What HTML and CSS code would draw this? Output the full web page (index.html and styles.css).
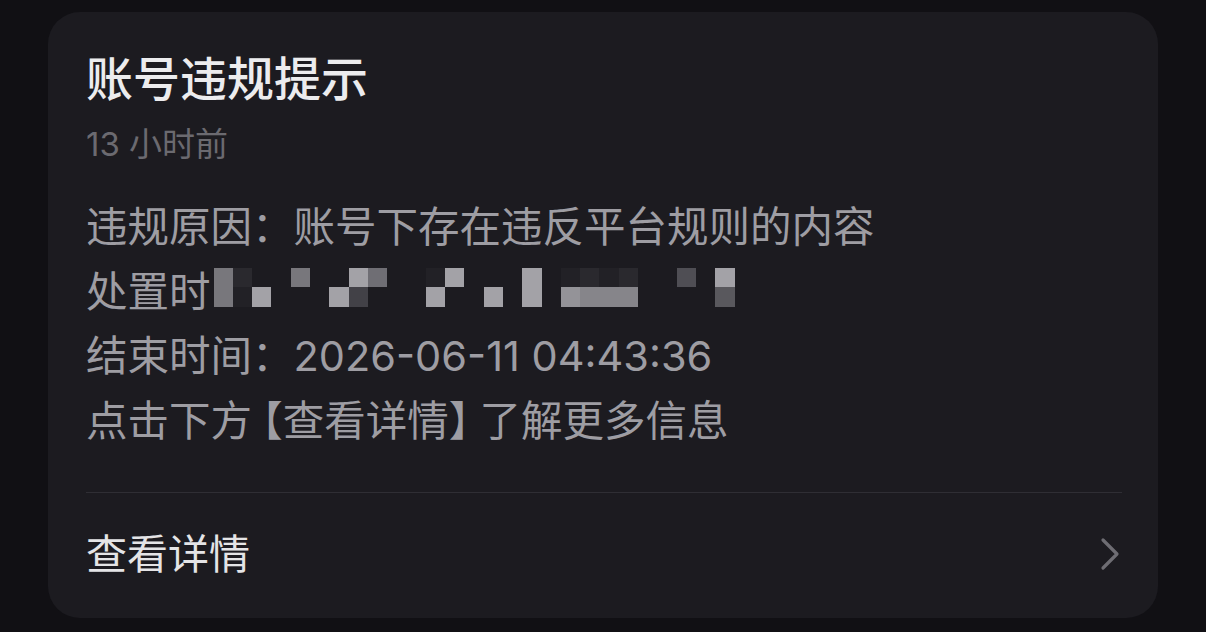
FILE: index.html
```html
<!DOCTYPE html>
<html lang="zh-CN">
<head>
  <meta charset="UTF-8">
  <title>账号违规提示</title>
  <link rel="stylesheet" href="styles.css">
</head>
<body>
  <div class="notice-card">
    <h1 class="notice-title">账号违规提示</h1>
    <div class="notice-time">13 小时前</div>

    <div class="notice-body">
      <p>违规原因：账号下存在违反平台规则的内容</p>
      <p class="redacted">处置时<span class="mosaic">
        <i class="c"></i><i class="g"></i><i></i><i></i><i class="c"></i><i></i><i></i><i class="a"></i><i class="c2"></i><i></i><i></i><i class="h"></i><i class="a"></i><i></i><i></i><i></i><i class="a"></i><i></i><i class="h"></i><i class="g"></i><i class="h"></i><i class="g"></i><i></i><i></i><i class="e"></i><i></i><i class="a"></i>
        <i class="c"></i><i class="h"></i><i class="a"></i><i></i><i></i><i></i><i class="a"></i><i class="f"></i><i></i><i></i><i></i><i class="a"></i><i></i><i></i><i class="a"></i><i></i><i class="a"></i><i></i><i class="a2"></i><i class="b"></i><i class="b"></i><i class="b"></i><i></i><i></i><i></i><i></i><i class="d"></i>
      </span></p>
      <p>结束时间：2026-06-11 04:43:36</p>
      <p>点击下方<span class="bracket bracket-open">【</span>查看详情<span class="bracket bracket-close">】</span>了解更多信息</p>
    </div>

    <div class="notice-divider"></div>

    <div class="notice-link">
      <span>查看详情</span>
      <svg class="chevron" width="22" height="36" viewBox="0 0 22 36">
        <path d="M4 4 L18 18 L4 32" fill="none" stroke="#6e6d73" stroke-width="3.2" stroke-linecap="round" stroke-linejoin="round"/>
      </svg>
    </div>
  </div>
</body>
</html>
```

FILE: styles.css
```css
body {
  margin: 0;
  padding: 12px 48px 14px;
  background: #111014;
  font-family: "Inter", "Noto Sans CJK SC", sans-serif;
}

.notice-card {
  background: #1c1b20;
  border-radius: 32px;
  padding: 37px 36px 32px 38px;
}

.notice-title {
  margin: 0;
  font-size: 47px;
  line-height: 60px;
  font-weight: 500;
  color: #ececee;
}

.notice-time {
  margin-top: 15px;
  font-size: 33px;
  line-height: 40px;
  color: #6b6a70;
}

.notice-body {
  margin-top: 31px;
}

.notice-body p {
  margin: 0;
  font-size: 41.5px;
  line-height: 64.5px;
  color: #9e9da3;
}

.notice-body .redacted {
  display: flex;
  align-items: center;
  height: 64.5px;
}

/* full-width brackets are narrower in the original font */
.bracket {
  font-feature-settings: "halt";
}

.bracket-open {
  margin-left: 10px;
}

.bracket-close {
  margin-right: 10px;
}

.mosaic {
  display: grid;
  grid-template-columns: repeat(27, 19.3px);
  grid-template-rows: 19px 20px;
  margin-left: 3px;
  margin-bottom: 9px;
}

.mosaic i { display: block; }
.mosaic .a { background: #a3a2a7; }
.mosaic .a2 { background: #949398; }
.mosaic .b { background: #86858a; }
.mosaic .c { background: #78777c; }
.mosaic .c2 { background: #6f6e74; }
.mosaic .d { background: #59585d; }
.mosaic .e { background: #4f4e54; }
.mosaic .f { background: #424147; }
.mosaic .g { background: #2a292e; }
.mosaic .h { background: #222126; }

.notice-divider {
  margin-top: 39px;
  height: 1px;
  background: #2f2e34;
}

.notice-link {
  display: flex;
  justify-content: space-between;
  align-items: center;
  padding-top: 29px;
  font-size: 41px;
  line-height: 64px;
  color: #e4e4e6;
}

.chevron {
  margin-right: 1px;
}
```
